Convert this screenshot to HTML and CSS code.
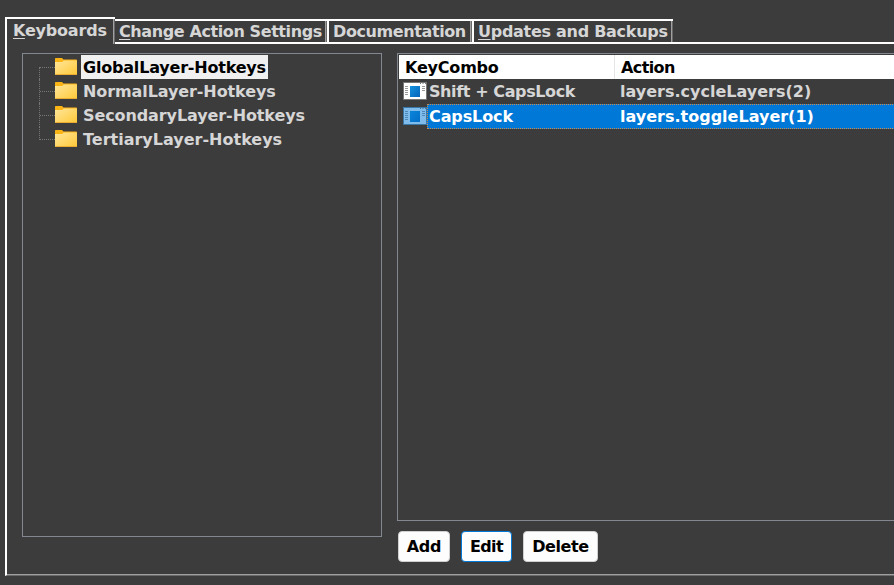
FILE: index.html
```
<!DOCTYPE html>
<html lang="en">
<head>
<meta charset="utf-8">
<title>Keyboards</title>
<link rel="stylesheet" href="styles.css">
</head>
<body>
<svg class="defs" width="0" height="0" aria-hidden="true">
  <defs>
    <linearGradient id="gold" x1="0" y1="0" x2="1" y2="1"><stop offset="0" stop-color="#ffe69b"/><stop offset="1" stop-color="#ffc937"/></linearGradient>
    <linearGradient id="blue" x1="0" y1="0" x2="1" y2="1"><stop offset="0" stop-color="#1492df"/><stop offset="1" stop-color="#0565ba"/></linearGradient>
    <symbol id="folder" viewBox="0 0 22 17">
      <path d="M0 .8Q0 0 .8 0H7l1.500 1.500H21.200Q22 1.500 22 2.300V8H0z" fill="#fbb415"/>
      <path d="M0 4H7.200L8.700 2.500H22V16.200Q22 17 21.200 17H.8Q0 17 0 16.200z" fill="url(#gold)"/>
      <path d="M.5 16.500H21.500" stroke="#e9ae32"/>
    </symbol>
    <symbol id="app" viewBox="0 0 24 18">
      <path class="frame" d="M.5 .5H23.500V17.500H.5z"/>
      <path d="M17 1.500h1M19.500 1.500h1M22 1.500h1" stroke="#777"/>
      <path d="M2 4.500h3M2 6.500h3M2 8.500h3M2 10.500h3M2 12.500h3M19 4.500h3M19 6.500h3M19 8.500h3" class="marks"/>
      <path d="M7 4H17V15H7z" fill="url(#blue)"/>
    </symbol>
  </defs>
</svg>
<main class="window">
  <nav class="tabs">
    <div class="tab active"><span class="s2"><u>K</u>eyboards</span></div>
    <div class="tab change"><span class="s4"><u>C</u>hange Action Settings</span></div>
    <div class="tab docs"><span class="s4">Documentation</span></div>
    <div class="tab updates"><span class="s3"><u>U</u>pdates and Backups</span></div>
  </nav>
  <section class="pane">
    <ul class="tree">
      <li><i class="branch"></i><svg class="folder"><use href="#folder"/></svg><span class="label selected s2">GlobalLayer-Hotkeys</span></li>
      <li><i class="branch"></i><svg class="folder"><use href="#folder"/></svg><span class="label s1">NormalLayer-Hotkeys</span></li>
      <li><i class="branch"></i><svg class="folder"><use href="#folder"/></svg><span class="label s1">SecondaryLayer-Hotkeys</span></li>
      <li><i class="branch"></i><svg class="folder"><use href="#folder"/></svg><span class="label">TertiaryLayer-Hotkeys</span></li>
    </ul>
    <div class="side">
      <div class="list">
        <div class="head"><span class="h-key s2">KeyCombo</span><span class="h-act s6">Action</span></div>
        <div class="row"><svg class="app"><use href="#app"/></svg><div class="cells"><span class="key s4">Shift + CapsLock</span><span class="act">layers.cycleLayers(2)</span></div></div>
        <div class="row current"><svg class="app"><use href="#app"/></svg><div class="cells"><span class="key s1">CapsLock</span><span class="act">layers.toggleLayer(1)</span></div></div>
      </div>
      <div class="buttons"><button class="add s2">Add</button><button class="edit s6">Edit</button><button class="delete s4">Delete</button></div>
    </div>
  </section>
</main>
</body>
</html>
```
FILE: styles.css
```
* { box-sizing: border-box; }
body {
  margin: 0;
  height: 585px;
  overflow: hidden;
  background: #3c3c3c;
  color: #d6d6d6;
  font: bold 16px/26px "DejaVu Sans", sans-serif;
  white-space: nowrap;
}
.s1 { letter-spacing: -.1px; }
.s2 { letter-spacing: -.2px; }
.s3 { letter-spacing: -.28px; }
.s4 { letter-spacing: -.4px; }
.s6 { letter-spacing: -.6px; }
.defs { position: absolute; }
.window { padding: 17px 0 0 5px; }
.tabs { display: flex; align-items: flex-end; height: 27px; }
.tab {
  height: 25px;
  border: 2px solid #fff;
  border-right: 0;
  padding-left: 4px;
  line-height: 22px;
  background: linear-gradient(90deg, #a0a0a0 1px, #696969 1px) right / 2px 100% no-repeat;
}
.tab u { text-underline-offset: 2px; text-decoration-thickness: 1px; }
.tab.active { width: 110px; height: 27px; border-bottom: 0; padding-left: 6px; line-height: 24px; }
.tab.change { width: 212px; border-left: 0; padding-left: 4px; }
.tab.docs { width: 145px; }
.tab.updates { width: 201px; }
.tabs::after { content: ""; flex: 1; height: 2px; background: #fff; }
.pane {
  display: flex;
  gap: 15px;
  height: 532px;
  padding: 9px 0 0 15px;
  border-left: 2px solid #fff;
  border-bottom: 1px solid #696969;
  box-shadow: inset 0 -1px #a0a0a0;
}
.tree {
  width: 360px;
  height: 484px;
  margin: 0;
  padding: 1px 0 0 16px;
  border: 1px solid #828790;
  list-style: none;
}
.tree li { display: flex; height: 24px; }
.branch { width: 16px; border-left: 1px dotted #777; }
.branch::after { content: ""; display: block; margin-top: 12px; border-top: 1px dotted #777; }
.tree li:first-child .branch { margin-top: 12px; }
.tree li:first-child .branch::after { margin-top: 0; }
.tree li:last-child .branch { margin-bottom: 11px; }
.folder { width: 22px; height: 17px; margin-top: 3px; }
.label { margin-left: 4px; padding: 0 2px; }
.label.selected { width: 187px; background: #f0f0f0; color: #000; }
.side { flex: 1; min-width: 0; }
.list { height: 468px; border: 1px solid #828790; border-right: 0; padding: 1px 0 0 1px; }
.head { display: flex; height: 24px; background: #fff; color: #000; }
.h-key { width: 216px; padding-left: 6px; border-right: 1px solid #e5e5e5; }
.h-act { padding-left: 6px; }
.row { display: flex; height: 25px; padding-left: 4px; }
.app { width: 24px; height: 18px; margin-top: 3px; }
.frame { fill: #fff; stroke: #777; }
.marks { stroke: #999; fill: none; }
.cells { display: flex; flex: 1; height: 25px; padding-left: 2px; }
.key { width: 191px; }
.current { color: #fff; }
.current .cells { outline: 1px dotted #d58b45; outline-offset: -1px; background: #0078d7; margin-right: -1px; }
.current .app { background: #0078d7; }
.current .app use { opacity: .5; }
.buttons { display: flex; padding: 10px 0 0 1px; }
button {
  height: 31px;
  padding: 0;
  border: 1px solid #d0d0d0;
  border-radius: 4px;
  background: #fdfdfd;
  color: #000;
  font: inherit;
  line-height: 24px;
}
.add { width: 52px; margin-right: 11px; }
.edit { width: 51px; margin-right: 11px; border-color: #0078d7; }
.delete { width: 75px; }
```
